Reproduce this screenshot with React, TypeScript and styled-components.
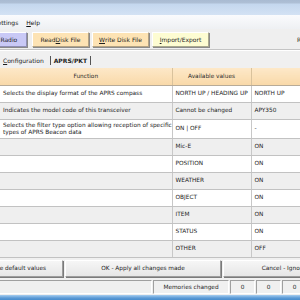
import styled, { createGlobalStyle } from 'styled-components';

const GlobalStyle = createGlobalStyle`
  html, body {
    margin: 0;
    padding: 0;
    overflow: hidden;
    background: #f0f0f0;
  }
  body {
    font-family: "DejaVu Sans", "Liberation Sans", sans-serif;
    font-size: 5.8px;
    color: #1e1e1e;
  }
`;

interface Row {
  fn: string[];
  values: string;
  def: string;
  tall?: boolean;
}

const rows: Row[] = [
  { fn: ['Selects the display format of the APRS compass'], values: 'NORTH UP / HEADING UP', def: 'NORTH UP' },
  { fn: ['Indicates the model code of this transceiver'], values: 'Cannot be changed', def: 'APY350' },
  {
    fn: ['Selects the filter type option allowing reception of specific', 'types of APRS Beacon data'],
    values: 'ON | OFF',
    def: '-',
    tall: true,
  },
  { fn: [], values: 'Mic-E', def: 'ON' },
  { fn: [], values: 'POSITION', def: 'ON' },
  { fn: [], values: 'WEATHER', def: 'ON' },
  { fn: [], values: 'OBJECT', def: 'ON' },
  { fn: [], values: 'ITEM', def: 'ON' },
  { fn: [], values: 'STATUS', def: 'ON' },
  { fn: [], values: 'OTHER', def: 'OFF' },
];

function App() {
  return (
    <>
      <GlobalStyle />
      <Window>
        <TitleBar />
        <MenuBar>
          <MenuItem><u>F</u>ile</MenuItem>
          <MenuItem><u>E</u>dit</MenuItem>
          <MenuItem><u>S</u>ettings</MenuItem>
          <MenuItem><u>H</u>elp</MenuItem>
        </MenuBar>
        <Toolbar>
          <ToolButton $kind="radio" $width={62}>Write to Radio</ToolButton>
          <ToolButton $kind="disk">Read <u>D</u>isk File</ToolButton>
          <ToolButton $kind="disk"><u>W</u>rite Disk File</ToolButton>
          <ToolButton $kind="io"><u>I</u>mport/Export</ToolButton>
          <RadioLabel>Radio: TH-D74</RadioLabel>
        </Toolbar>
        <Content>
          <TabStrip>
            <Tab><u>C</u>onfiguration</Tab>
            <Tab $active>APRS/PKT</Tab>
          </TabStrip>
          <Grid>
            <colgroup>
              <col style={{ width: 172 }} />
              <col style={{ width: 79 }} />
              <col />
            </colgroup>
            <thead>
              <tr>
                <HeadCell>Function</HeadCell>
                <HeadCell>Available values</HeadCell>
                <HeadCell>Default</HeadCell>
              </tr>
            </thead>
            <tbody>
              {rows.map((row, index) => (
                <BodyRow key={index} $odd={index % 2 === 1} $tall={row.tall}>
                  <Cell>
                    {row.fn.map((line, i) => (
                      <Line key={i}>{line}</Line>
                    ))}
                  </Cell>
                  <Cell>{row.values}</Cell>
                  <Cell>{row.def}</Cell>
                </BodyRow>
              ))}
            </tbody>
          </Grid>
        </Content>
        <ButtonRow>
          <ActionButton $width={110}>Restore the default values</ActionButton>
          <ActionButton $width={156}>OK - Apply all changes made</ActionButton>
          <ActionButton $width={156}>Cancel - Ignore all changes</ActionButton>
        </ButtonRow>
        <StatusBar>
          <StatusPanel $grow />
          <StatusPanel $width={76}>Memories changed</StatusPanel>
          <StatusPanel $width={25}>0</StatusPanel>
          <StatusPanel $width={25}>0</StatusPanel>
          <StatusPanel $width={25}>0</StatusPanel>
          <StatusPanel $width={72} />
        </StatusBar>
        <FrameEdge />
      </Window>
    </>
  );
}

const Window = styled.div`
  width: 440px;
  height: 300px;
  margin-left: -60px;
  display: flex;
  flex-direction: column;
  background: #f0f0f0;
`;

const TitleBar = styled.div`
  height: 15px;
  flex: none;
  background: linear-gradient(#a9bbd2 0, #aebfd5 3px, #c4d7ee 4px, #d3e2f4 15px);
`;

const MenuBar = styled.div`
  height: 14px;
  flex: none;
  display: flex;
  align-items: center;
  padding-left: 12px;
  background: linear-gradient(#fafbfd, #eef0f3);
  font-size: 6px;
`;

const MenuItem = styled.span`
  padding: 0 4px;
  color: #111;
`;

const Toolbar = styled.div`
  height: 21px;
  flex: none;
  box-sizing: border-box;
  display: flex;
  align-items: flex-start;
  gap: 3px;
  padding: 3px 0 0 25px;
  border-bottom: 1px solid #c4c4c4;
  box-shadow: 0 1px 0 #ffffff;
  background: #efefef;
`;

const kindColors = {
  radio: { bg: '#c9c9f6', border: '#8f8fb4' },
  disk: { bg: '#fde3b4', border: '#b3a283' },
  io: { bg: '#fdfcd2', border: '#a9a88e' },
};

const ToolButton = styled.div<{ $kind: keyof typeof kindColors; $width?: number }>`
  width: ${({ $width }) => $width ?? 57}px;
  height: 15px;
  box-sizing: border-box;
  display: flex;
  align-items: center;
  justify-content: center;
  white-space: nowrap;
  font-size: 6px;
  background: ${({ $kind }) => kindColors[$kind].bg};
  border: 1px solid ${({ $kind }) => kindColors[$kind].border};
  border-top-color: #ffffff;
  border-left-color: #ffffff;
  box-shadow: 1px 1px 0 #8a8a8a;
  &:first-child {
    margin-right: 2px;
  }
`;

const RadioLabel = styled.span`
  margin-left: 85px;
  margin-top: 4px;
  font-size: 6px;
  white-space: nowrap;
`;

const Content = styled.div`
  padding-left: 60px;
  display: flex;
  flex-direction: column;
  flex: none;
`;

const TabStrip = styled.div`
  height: 18px;
  box-sizing: border-box;
  display: flex;
  align-items: center;
  gap: 2px;
  padding: 2px 0 0 0;
  font-size: 6px;
`;

const Tab = styled.span<{ $active?: boolean }>`
  padding: 1px ${({ $active }) => ($active ? 3 : 2)}px;
  font-weight: ${({ $active }) => ($active ? 'bold' : 'normal')};
  border-left: 1px solid ${({ $active }) => ($active ? '#555' : 'transparent')};
  border-right: 1px solid ${({ $active }) => ($active ? '#555' : 'transparent')};
  margin-left: ${({ $active }) => ($active ? '1px' : '0')};
`;

const Grid = styled.table`
  width: 380px;
  table-layout: fixed;
  border-collapse: collapse;
  border-spacing: 0;
`;

const HeadCell = styled.th`
  height: 17px;
  box-sizing: border-box;
  padding: 0;
  font-weight: normal;
  text-align: center;
  color: #2a2a2a;
  background: linear-gradient(#fde8c8, #f9d9a9);
  border-right: 1px solid #d9c29c;
  border-bottom: 1px solid #b8ab98;
`;

const BodyRow = styled.tr<{ $odd: boolean; $tall?: boolean }>`
  height: ${({ $tall }) => ($tall ? 19 : 17)}px;
  background: ${({ $odd }) => ($odd ? '#efefef' : '#ffffff')};
`;

const Cell = styled.td`
  padding: 0 3px;
  box-sizing: border-box;
  white-space: nowrap;
  vertical-align: middle;
  border-right: 1px solid #c8c8c8;
  border-bottom: 1px solid #c2c2c2;
  line-height: 7px;
`;

const Line = styled.div`
  white-space: nowrap;
`;

const ButtonRow = styled.div`
  height: 21px;
  flex: none;
  box-sizing: border-box;
  display: flex;
  gap: 2px;
  padding: 2px 0 0 13px;
  margin-top: auto;
`;

const ActionButton = styled.div<{ $width: number }>`
  width: ${({ $width }) => $width}px;
  height: 17px;
  flex: none;
  box-sizing: border-box;
  display: flex;
  align-items: center;
  justify-content: center;
  white-space: nowrap;
  background: linear-gradient(#f6f6f6, #e6e6e6);
  border: 1px solid #9c9c9c;
  border-top-color: #ffffff;
  border-left-color: #ffffff;
  box-shadow: 1px 1px 0 #7a7a7a;
`;

const StatusBar = styled.div`
  height: 16px;
  flex: none;
  box-sizing: border-box;
  display: flex;
  gap: 1px;
  padding: 1px 0;
`;

const StatusPanel = styled.div<{ $width?: number; $grow?: boolean }>`
  ${({ $grow }) => ($grow ? 'flex: 1;' : 'flex: none;')}
  width: ${({ $width }) => ($width ? `${$width}px` : 'auto')};
  box-sizing: border-box;
  display: flex;
  align-items: center;
  justify-content: center;
  white-space: nowrap;
  border: 1px solid #ffffff;
  border-top-color: #a0a0a0;
  border-left-color: #a0a0a0;
`;

const FrameEdge = styled.div`
  height: 6px;
  flex: none;
  background: linear-gradient(#a7cdef, #5b9ad6 3px, #3f86c8);
`;

export default App;
